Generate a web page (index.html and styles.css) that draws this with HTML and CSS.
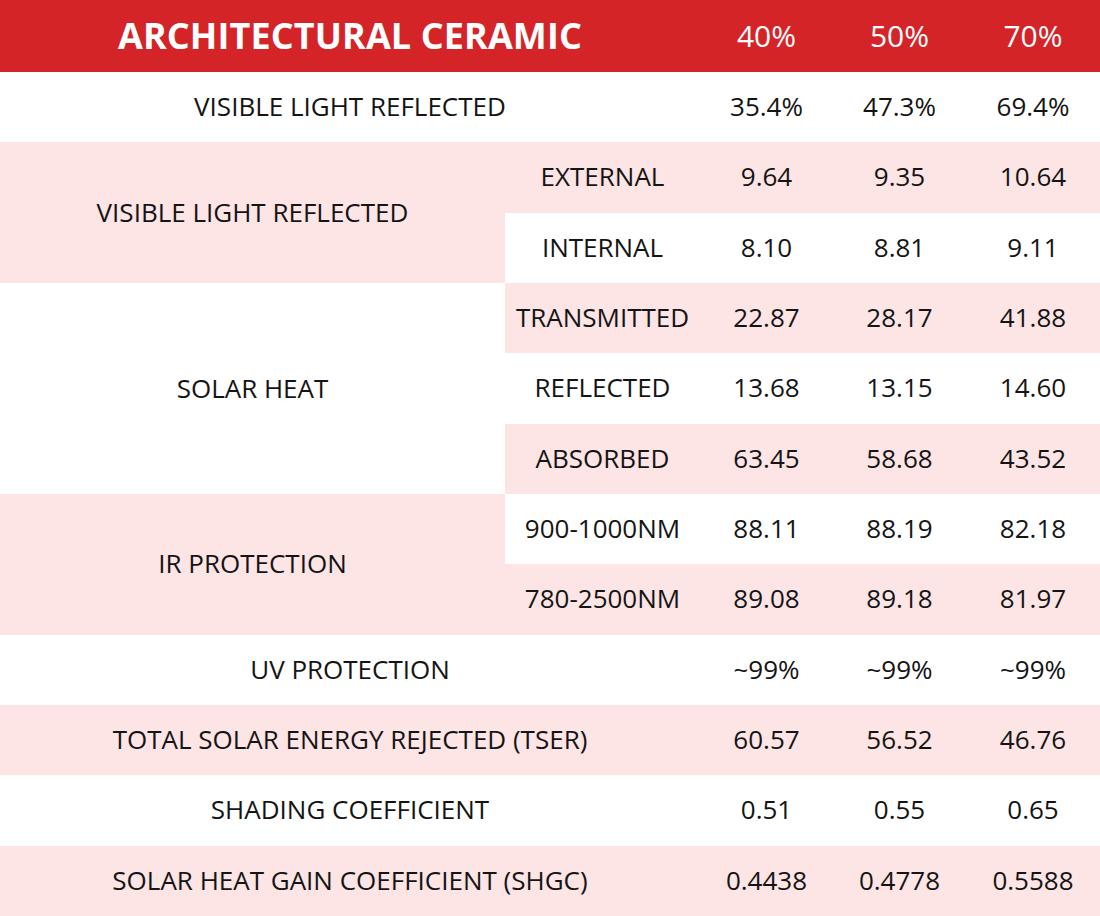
FILE: index.html
```html
<!DOCTYPE html>
<html>
<head>
<meta charset="utf-8">
<link rel="stylesheet" href="styles.css">
</head>
<body>
<div class="sheet">
  <div class="c hd title span2">ARCHITECTURAL CERAMIC</div>
  <div class="c hd pct">40%</div>
  <div class="c hd pct">50%</div>
  <div class="c hd pct">70%</div>

  <div class="c span2">VISIBLE LIGHT REFLECTED</div>
  <div class="c">35.4%</div><div class="c">47.3%</div><div class="c">69.4%</div>

  <div class="c pk rs2">VISIBLE LIGHT REFLECTED</div>
  <div class="c pk">EXTERNAL</div><div class="c pk">9.64</div><div class="c pk">9.35</div><div class="c pk">10.64</div>
  <div class="c">INTERNAL</div><div class="c">8.10</div><div class="c">8.81</div><div class="c">9.11</div>

  <div class="c rs3">SOLAR HEAT</div>
  <div class="c pk">TRANSMITTED</div><div class="c pk">22.87</div><div class="c pk">28.17</div><div class="c pk">41.88</div>
  <div class="c">REFLECTED</div><div class="c">13.68</div><div class="c">13.15</div><div class="c">14.60</div>
  <div class="c pk">ABSORBED</div><div class="c pk">63.45</div><div class="c pk">58.68</div><div class="c pk">43.52</div>

  <div class="c pk rs2">IR PROTECTION</div>
  <div class="c">900-1000NM</div><div class="c">88.11</div><div class="c">88.19</div><div class="c">82.18</div>
  <div class="c pk">780-2500NM</div><div class="c pk">89.08</div><div class="c pk">89.18</div><div class="c pk">81.97</div>

  <div class="c span2">UV PROTECTION</div>
  <div class="c">~99%</div><div class="c">~99%</div><div class="c">~99%</div>

  <div class="c pk span2">TOTAL SOLAR ENERGY REJECTED (TSER)</div>
  <div class="c pk">60.57</div><div class="c pk">56.52</div><div class="c pk">46.76</div>

  <div class="c span2">SHADING COEFFICIENT</div>
  <div class="c">0.51</div><div class="c">0.55</div><div class="c">0.65</div>

  <div class="c pk span2">SOLAR HEAT GAIN COEFFICIENT (SHGC)</div>
  <div class="c pk">0.4438</div><div class="c pk">0.4778</div><div class="c pk">0.5588</div>
</div>
</body>
</html>
```
FILE: styles.css
```css
html, body {
  margin: 0;
  padding: 0;
  background: #ffffff;
}
.sheet {
  width: 1100px;
  height: 916px;
  display: grid;
  grid-template-columns: 505px 195px 133px 133px 134px;
  grid-template-rows: 72px repeat(12, 1fr);
  font-family: "Open Sans", "Liberation Sans", sans-serif;
  font-size: 26px;
  color: #141414;
}
.c {
  display: flex;
  align-items: center;
  justify-content: center;
  white-space: nowrap;
  background: #ffffff;
  padding-bottom: 2px;
}
.pk {
  background: #fde4e5;
}
.hd {
  background: #d42428;
  color: #ffffff;
}
.title {
  font-weight: 700;
  font-size: 36px;
  letter-spacing: 0.1px;
}
.pct {
  font-size: 30px;
  font-weight: 400;
}
.span2 {
  grid-column: span 2;
}
.rs2 {
  grid-row: span 2;
}
.rs3 {
  grid-row: span 3;
}
```
